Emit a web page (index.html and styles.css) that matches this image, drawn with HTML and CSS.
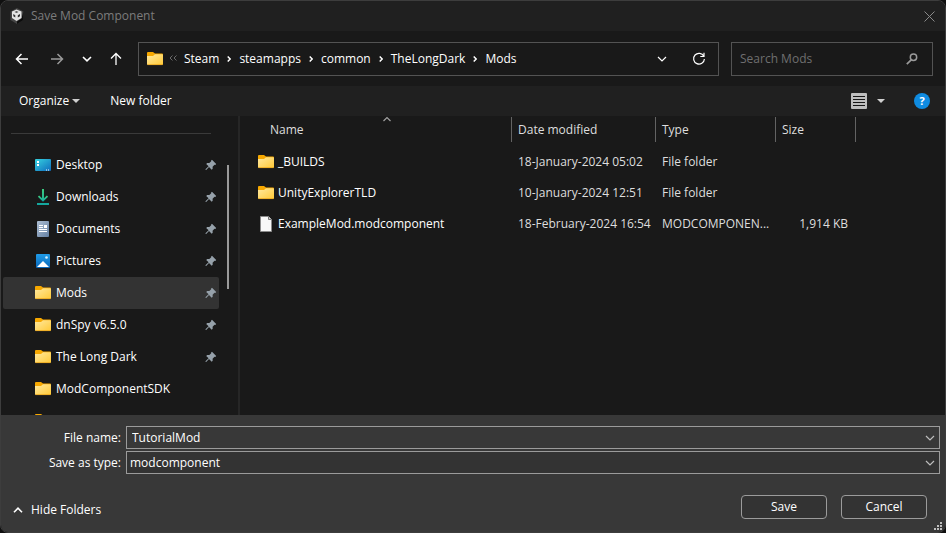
FILE: index.html
```html
<!DOCTYPE html>
<html lang="en">

<head>
    <meta charset="UTF-8">
    <meta name="viewport" content="width=device-width, initial-scale=1.0">
    <title>Save Mod Component</title>
    <link rel="stylesheet" href="styles.css">
</head>

<body>

    <!-- shared icons -->
    <svg class="sprite" width="0" height="0" aria-hidden="true">
        <defs>
            <linearGradient id="folderFill" x1="0" y1="0" x2="1" y2="1">
                <stop offset="0" stop-color="#ffe9a0"/>
                <stop offset="1" stop-color="#ffc937"/>
            </linearGradient>
            <linearGradient id="desktopFill" x1="0" y1="0" x2="1" y2="1">
                <stop offset="0" stop-color="#36d3e0"/>
                <stop offset="1" stop-color="#0f6cbd"/>
            </linearGradient>
            <linearGradient id="downloadFill" x1="0" y1="0" x2="0" y2="1">
                <stop offset="0" stop-color="#3ccb7f"/>
                <stop offset="1" stop-color="#12a5a0"/>
            </linearGradient>
            <linearGradient id="documentFill" x1="0" y1="0" x2="1" y2="1">
                <stop offset="0" stop-color="#aebfd3"/>
                <stop offset="1" stop-color="#6480a3"/>
            </linearGradient>
            <linearGradient id="pictureFill" x1="0" y1="0" x2="0" y2="1">
                <stop offset="0" stop-color="#1f9ce8"/>
                <stop offset="1" stop-color="#0a66b8"/>
            </linearGradient>
        </defs>
        <symbol id="folder" viewBox="0 0 16 16">
            <path d="M0 2a1 1 0 0 1 1-1h5l2 1.500h7a1 1 0 0 1 1 1V7H0z" fill="#f7a800"/>
            <path d="M0 5h6l2-1.800h7.200a.8.8 0 0 1 .8.800v9a1 1 0 0 1-1 1H1a1 1 0 0 1-1-1z" fill="url(#folderFill)"/>
            <path d="M.5 13.600h15" stroke="#eaa41c" stroke-width=".8"/>
        </symbol>
        <symbol id="pin" viewBox="0 0 12 12">
            <path d="M7 .8 11.200 5l-.9.900-.8-.1-1.900 1.900.1 2-1 1L4 8 1.200 11l-.8-.3.300-.8L3.600 7.300 1.200 4.900l1-.9 2.100.1 1.900-1.900-.1-.700z" fill="#96a1aa"/>
        </symbol>
        <symbol id="chevron" viewBox="0 0 10 6">
            <path d="M1 1l4 4 4-4" fill="none" stroke="currentColor" stroke-width="1.200"/>
        </symbol>
        <symbol id="separator" viewBox="0 0 4 8">
            <path d="M.7 1.500 3.200 4 .7 6.500" fill="none" stroke="currentColor" stroke-width="1.500"/>
        </symbol>
        <symbol id="triangle" viewBox="0 0 8 4">
            <path d="M0 0h8L4 4z" fill="currentColor"/>
        </symbol>
    </svg>

    <div class="dialog">

        <header class="titlebar">
            <svg class="app-icon" viewBox="0 0 14 16">
                <path d="M7 0l6.500 3.500V12L7 16 .5 12V3.500z" fill="#444"/>
                <path d="M13.500 3.500V12L7 16v-2.500l4.500-3z" fill="#0c0c0c"/>
                <path d="M6.500 1.500 11.500 3.500v6.500L6.500 13 2 10V3.500z" fill="#e4e4e4"/>
                <path d="M4.500 4 6.500 3l2 1-2 1z" fill="#555"/>
                <path d="M3.300 6l2 1.200v2.300l-2-1.200zM10 6 7.800 7.200v2.300L10 8.300z" fill="#333"/>
            </svg>
            <h1 class="title">Save Mod Component</h1>
            <button class="close" aria-label="Close">
                <svg width="11" height="11" viewBox="0 0 11 11"><path d="M.5.5l10 10M10.500.5l-10 10" stroke="currentColor"/></svg>
            </button>
        </header>

        <nav class="navbar">
            <button class="nav-button" aria-label="Back">
                <svg width="14" height="14" viewBox="0 0 14 14"><path d="M13 7H1.500M6.500 2l-5 5 5 5" fill="none" stroke="currentColor" stroke-width="1.500"/></svg>
            </button>
            <button class="nav-button forward" aria-label="Forward">
                <svg width="14" height="14" viewBox="0 0 14 14"><path d="M1 7h11.500M7.500 2l5 5-5 5" fill="none" stroke="currentColor" stroke-width="1.500"/></svg>
            </button>
            <button class="nav-button recent" aria-label="Recent locations">
                <svg width="10" height="6" viewBox="0 0 10 6"><path d="M1 1l4 3.800L9 1" fill="none" stroke="currentColor" stroke-width="1.600"/></svg>
            </button>
            <button class="nav-button up" aria-label="Up">
                <svg width="14" height="14" viewBox="0 0 14 14"><path d="M7 13V1.500M2 6.500l5-5 5 5" fill="none" stroke="currentColor" stroke-width="1.300"/></svg>
            </button>

            <div class="address">
                <svg class="icon"><use href="#folder"/></svg>
                <svg class="overflow" width="8" height="8" viewBox="0 0 8 8"><path d="M3.500.5 1 3l2.500 2.500M7.500.5 5 3l2.500 2.500" fill="none" stroke="currentColor"/></svg>
                <a href="#">Steam</a>
                <svg class="separator"><use href="#separator"/></svg>
                <a href="#">steamapps</a>
                <svg class="separator"><use href="#separator"/></svg>
                <a href="#">common</a>
                <svg class="separator"><use href="#separator"/></svg>
                <a href="#">TheLongDark</a>
                <svg class="separator"><use href="#separator"/></svg>
                <a href="#">Mods</a>
                <button class="history" aria-label="Previous locations">
                    <svg class="chevron"><use href="#chevron"/></svg>
                </button>
                <button class="refresh" aria-label="Refresh">
                    <svg width="14" height="14" viewBox="0 0 14 14"><path d="M11.800 4.200A5.400 5.400 0 1 0 12.400 7M12 .8v3.700H8.300" fill="none" stroke="currentColor" stroke-width="1.200"/></svg>
                </button>
            </div>

            <div class="search">
                <input type="search" placeholder="Search Mods" aria-label="Search Mods">
                <svg width="12" height="12" viewBox="0 0 12 12"><circle cx="7.500" cy="4.300" r="3.200" fill="none" stroke="currentColor" stroke-width="1.500"/><path d="M5.200 6.800.8 11.200" stroke="currentColor" stroke-width="1.700"/></svg>
            </div>
        </nav>

        <div class="toolbar">
            <button class="organize">Organize <svg class="triangle"><use href="#triangle"/></svg></button>
            <button>New folder</button>
            <button class="view" aria-label="Change your view">
                <svg width="16" height="16" viewBox="0 0 16 16"><rect width="16" height="16" rx="1" fill="#bebebe"/><path d="M2 3.500h12M2 6.500h12M2 9.500h12M2 12.500h12" stroke="#161616"/></svg>
                <svg class="triangle"><use href="#triangle"/></svg>
            </button>
            <button class="help" aria-label="Get help">?</button>
        </div>

        <div class="main">
            <aside class="sidebar">
                <ul class="places">
                    <li><a href="#">
                        <svg class="icon" viewBox="0 0 16 16"><rect y="2" width="16" height="12" rx="1" fill="url(#desktopFill)"/><path d="M2 4h2v2H2zM2 7h2v2H2z" fill="#fff"/><path d="M11 13h1M13 13h1" stroke="#fff"/></svg>
                        <span>Desktop</span><svg class="pin"><use href="#pin"/></svg>
                    </a></li>
                    <li><a href="#">
                        <svg class="icon" viewBox="0 0 16 16"><path d="M3.500 7.200 8 11.500l4.500-4.300" fill="none" stroke="url(#downloadFill)" stroke-width="1.800"/><path d="M7 0h2v11H7zM2 14h12v2H2z" fill="url(#downloadFill)"/></svg>
                        <span>Downloads</span><svg class="pin"><use href="#pin"/></svg>
                    </a></li>
                    <li><a href="#">
                        <svg class="icon" viewBox="0 0 16 16"><rect x="2" width="12" height="16" rx="1" fill="url(#documentFill)"/><path d="M4 4.500h4M4 6.500h4M4 8.500h8M4 10.500h8" stroke="#fff"/><path d="M9 4h3v3H9z" fill="#fff"/></svg>
                        <span>Documents</span><svg class="pin"><use href="#pin"/></svg>
                    </a></li>
                    <li><a href="#">
                        <svg class="icon" viewBox="0 0 16 16"><rect x="1" y="1" width="14" height="14" rx="1" fill="url(#pictureFill)"/><path d="M2 14 8 8l6 6z" fill="#fff"/><circle cx="11.500" cy="4.500" r="1.300" fill="#d8f1ff"/></svg>
                        <span>Pictures</span><svg class="pin"><use href="#pin"/></svg>
                    </a></li>
                    <li><a href="#" class="selected">
                        <svg class="icon"><use href="#folder"/></svg>
                        <span>Mods</span><svg class="pin"><use href="#pin"/></svg>
                    </a></li>
                    <li><a href="#">
                        <svg class="icon"><use href="#folder"/></svg>
                        <span>dnSpy v6.5.0</span><svg class="pin"><use href="#pin"/></svg>
                    </a></li>
                    <li><a href="#">
                        <svg class="icon"><use href="#folder"/></svg>
                        <span>The Long Dark</span><svg class="pin"><use href="#pin"/></svg>
                    </a></li>
                    <li><a href="#">
                        <svg class="icon"><use href="#folder"/></svg>
                        <span>ModComponentSDK</span>
                    </a></li>
                    <li><a href="#" aria-label="Folder">
                        <svg class="icon"><use href="#folder"/></svg>
                    </a></li>
                </ul>
                <div class="scrollbar"><div class="thumb"></div></div>
            </aside>

            <section class="files">
                <table>
                    <colgroup>
                        <col class="col-name">
                        <col class="col-date">
                        <col class="col-type">
                        <col class="col-size">
                    </colgroup>
                    <thead>
                        <tr>
                            <th class="sorted">Name<svg class="sort-arrow" viewBox="0 0 10 6"><path d="M1.500 5 5 1.500 8.500 5" fill="none" stroke="currentColor" stroke-width="1.200"/></svg></th>
                            <th>Date modified</th>
                            <th>Type</th>
                            <th>Size</th>
                        </tr>
                    </thead>
                    <tbody>
                        <tr>
                            <td><div class="file"><svg class="icon"><use href="#folder"/></svg>_BUILDS</div></td>
                            <td>18-January-2024 05:02</td>
                            <td>File folder</td>
                            <td></td>
                        </tr>
                        <tr>
                            <td><div class="file"><svg class="icon"><use href="#folder"/></svg>UnityExplorerTLD</div></td>
                            <td>10-January-2024 12:51</td>
                            <td>File folder</td>
                            <td></td>
                        </tr>
                        <tr>
                            <td><div class="file"><svg class="icon" viewBox="0 0 16 16"><path d="M2.500.5h8l3 3v12h-11z" fill="#f8f8f8" stroke="#8a8a8a"/><path d="M10.500.5v3h3" fill="#d0d0d0" stroke="#777"/></svg>ExampleMod.modcomponent</div></td>
                            <td>18-February-2024 16:54</td>
                            <td>MODCOMPONEN...</td>
                            <td>1,914 KB</td>
                        </tr>
                    </tbody>
                </table>
            </section>
        </div>

        <footer class="footer">
            <div class="fields">
                <label for="fileName">File name:</label>
                <div class="field">
                    <input type="text" id="fileName" value="TutorialMod">
                    <svg class="chevron"><use href="#chevron"/></svg>
                </div>
                <label for="fileType">Save as type:</label>
                <div class="field type">
                    <select id="fileType"><option>modcomponent</option></select>
                    <svg class="chevron"><use href="#chevron"/></svg>
                </div>
            </div>
            <div class="actions">
                <button class="hide-folders">
                    <svg width="10" height="6" viewBox="0 0 10 6"><path d="M1 5.300 5 1.200l4 4.100" fill="none" stroke="currentColor" stroke-width="1.600"/></svg>
                    Hide Folders
                </button>
                <button class="push">Save</button>
                <button class="push">Cancel</button>
            </div>
            <svg class="grip" viewBox="0 0 8 8"><path d="M6 0h2v2H6zM3 3h2v2H3zM6 3h2v2H6zM0 6h2v2H0zM3 6h2v2H3zM6 6h2v2H6z" fill="#bfbfbf"/></svg>
        </footer>
    </div>

</body>

</html>
```
FILE: styles.css
```css
* {
    box-sizing: border-box;
}

body {
    margin: 0;
    background-color: #101010;
    color: #fff;
    font-family: "Open Sans", "Noto Sans", sans-serif;
    font-size: 12px;
    line-height: 16px;
}

button,
input,
select {
    padding: 0;
    border: none;
    background: none;
    color: inherit;
    font: inherit;
}

a {
    color: inherit;
    text-decoration: none;
}

svg {
    display: block;
    flex: none;
}

.sprite {
    position: absolute;
}

.dialog {
    display: flex;
    flex-direction: column;
    height: 100vh;
    border: 1px solid #3d3d3d;
    border-radius: 8px;
    background-color: #191919;
    overflow: hidden;
}

.icon {
    width: 16px;
    height: 16px;
}

.chevron {
    width: 10px;
    height: 6px;
}

.triangle {
    width: 8px;
    height: 4px;
    color: #d0d0d0;
}

/* title bar */
.titlebar {
    display: flex;
    align-items: center;
    height: 30px;
    padding: 0 10px 0 9px;
    background-color: #202020;
    color: #7c7c7c;
}

.app-icon {
    width: 14px;
    height: 16px;
}

.title {
    margin: 0 auto 0 7px;
    font-size: 12px;
    font-weight: normal;
}

.close {
    color: #8a8a8a;
}

/* navigation */
.navbar {
    display: flex;
    align-items: center;
    height: 55px;
    padding: 0 12px 0 14px;
}

.nav-button {
    width: 14px;
    margin-right: 21px;
}

.nav-button.forward {
    margin-right: 18px;
    color: #9a9a9a;
}

.nav-button.recent {
    width: 10px;
    margin-right: 17px;
}

.nav-button.up {
    margin-right: 15px;
}

.address,
.search {
    display: flex;
    align-items: center;
    height: 34px;
    border: 1px solid #535353;
}

.address {
    flex: 1;
    padding: 0 12px 0 8px;
}

.overflow {
    margin: 0 7px 0 6px;
    color: #6a6a6a;
}

.separator {
    width: 4px;
    height: 8px;
    margin: 0 8px;
}

.history {
    margin-left: auto;
}

.refresh {
    margin-left: 25px;
}

.search {
    width: 202px;
    margin-left: 12px;
    padding: 0 14px 0 8px;
    color: #9a9a9a;
}

.search input {
    flex: 1;
    min-width: 0;
    outline: none;
}

.search input::placeholder {
    color: #6f6f6f;
}

/* toolbar */
.toolbar {
    display: flex;
    align-items: center;
    height: 30px;
    padding: 0 15px 0 18px;
    background-color: #202020;
}

.organize,
.view {
    display: flex;
    align-items: center;
}

.organize {
    gap: 3px;
    margin-right: 30px;
}

.view {
    gap: 10px;
    margin-left: auto;
}

.help {
    width: 16px;
    height: 16px;
    margin-left: 29px;
    border-radius: 50%;
    background-color: #0f8be0;
    font-size: 11px;
    font-weight: bold;
    line-height: 16px;
}

/* places and files */
.main {
    display: flex;
    flex: 1;
    min-height: 0;
}

.sidebar {
    display: flex;
    width: 239px;
    border-right: 2px solid #262626;
    overflow: hidden;
}

.places {
    width: 216px;
    margin: 0 8px 0 2px;
    padding: 0;
    list-style: none;
}

.places::before {
    content: "";
    display: block;
    margin: 17px 8px 15px;
    border-top: 1px solid #3a3a3a;
}

.places a {
    display: flex;
    align-items: center;
    gap: 5px;
    height: 32px;
    padding: 0 2px 0 32px;
    border-radius: 2px;
}

.places .selected {
    background-color: #333;
}

.pin {
    width: 12px;
    height: 12px;
    margin-left: auto;
}

.scrollbar {
    width: 2px;
    padding-top: 49px;
}

.thumb {
    height: 124px;
    background-color: #9a9a9a;
}

.files {
    flex: 1;
    min-width: 0;
    overflow: hidden;
}

table {
    table-layout: fixed;
    width: 616px;
    border-collapse: separate;
    border-spacing: 0;
}

.col-name {
    width: 272px;
}

.col-date {
    width: 144px;
}

.col-type {
    width: 120px;
}

.col-size {
    width: 80px;
}

th {
    position: relative;
    height: 30px;
    padding: 0 6px 2px;
    color: #dedede;
    font-weight: normal;
    text-align: left;
}

.sorted {
    padding-left: 30px;
}

/* column divider */
th::after {
    content: "";
    position: absolute;
    top: 1px;
    right: 0;
    width: 1px;
    height: 25px;
    background-color: #636363;
}

.sort-arrow {
    position: absolute;
    top: 0;
    left: 142px;
    width: 10px;
    height: 6px;
    color: #a0a0a0;
}

td {
    height: 31px;
    padding: 0 0 0 6px;
    color: #dedede;
    overflow: hidden;
    text-overflow: ellipsis;
    white-space: nowrap;
}

td:first-child {
    padding-left: 18px;
    color: #fff;
}

td:last-child {
    text-align: right;
    padding-right: 8px;
}

.file {
    display: flex;
    align-items: center;
    gap: 4px;
}

/* footer */
.footer {
    position: relative;
    padding: 11px 5px 13px 12px;
    background-color: #383838;
}

.fields {
    display: grid;
    grid-template-columns: 108px 1fr;
    gap: 2px 5px;
    align-items: center;
}

.fields label {
    text-align: right;
}

.field {
    display: flex;
    align-items: center;
    height: 23px;
    padding-right: 4px;
    border: 1px solid #9b9b9b;
    color: #fff;
}

.field input,
.field select {
    flex: 1;
    min-width: 0;
    height: 21px;
    padding: 0 5px;
    outline: none;
    appearance: none;
}

.field select {
    padding: 0 3px;
}

.type {
    background-color: #333;
}

.field .chevron {
    color: #bdbdbd;
}

.actions {
    display: flex;
    align-items: center;
    gap: 14px;
    margin-top: 21px;
    padding-right: 13px;
}

.hide-folders {
    display: flex;
    align-items: center;
    gap: 8px;
    margin-right: auto;
    padding-top: 6px;
}

.push {
    width: 86px;
    height: 24px;
    border: 1px solid #9b9b9b;
    border-radius: 4px;
    background-color: #333;
}

.grip {
    position: absolute;
    right: 3px;
    bottom: 2px;
    width: 8px;
    height: 8px;
}
```
